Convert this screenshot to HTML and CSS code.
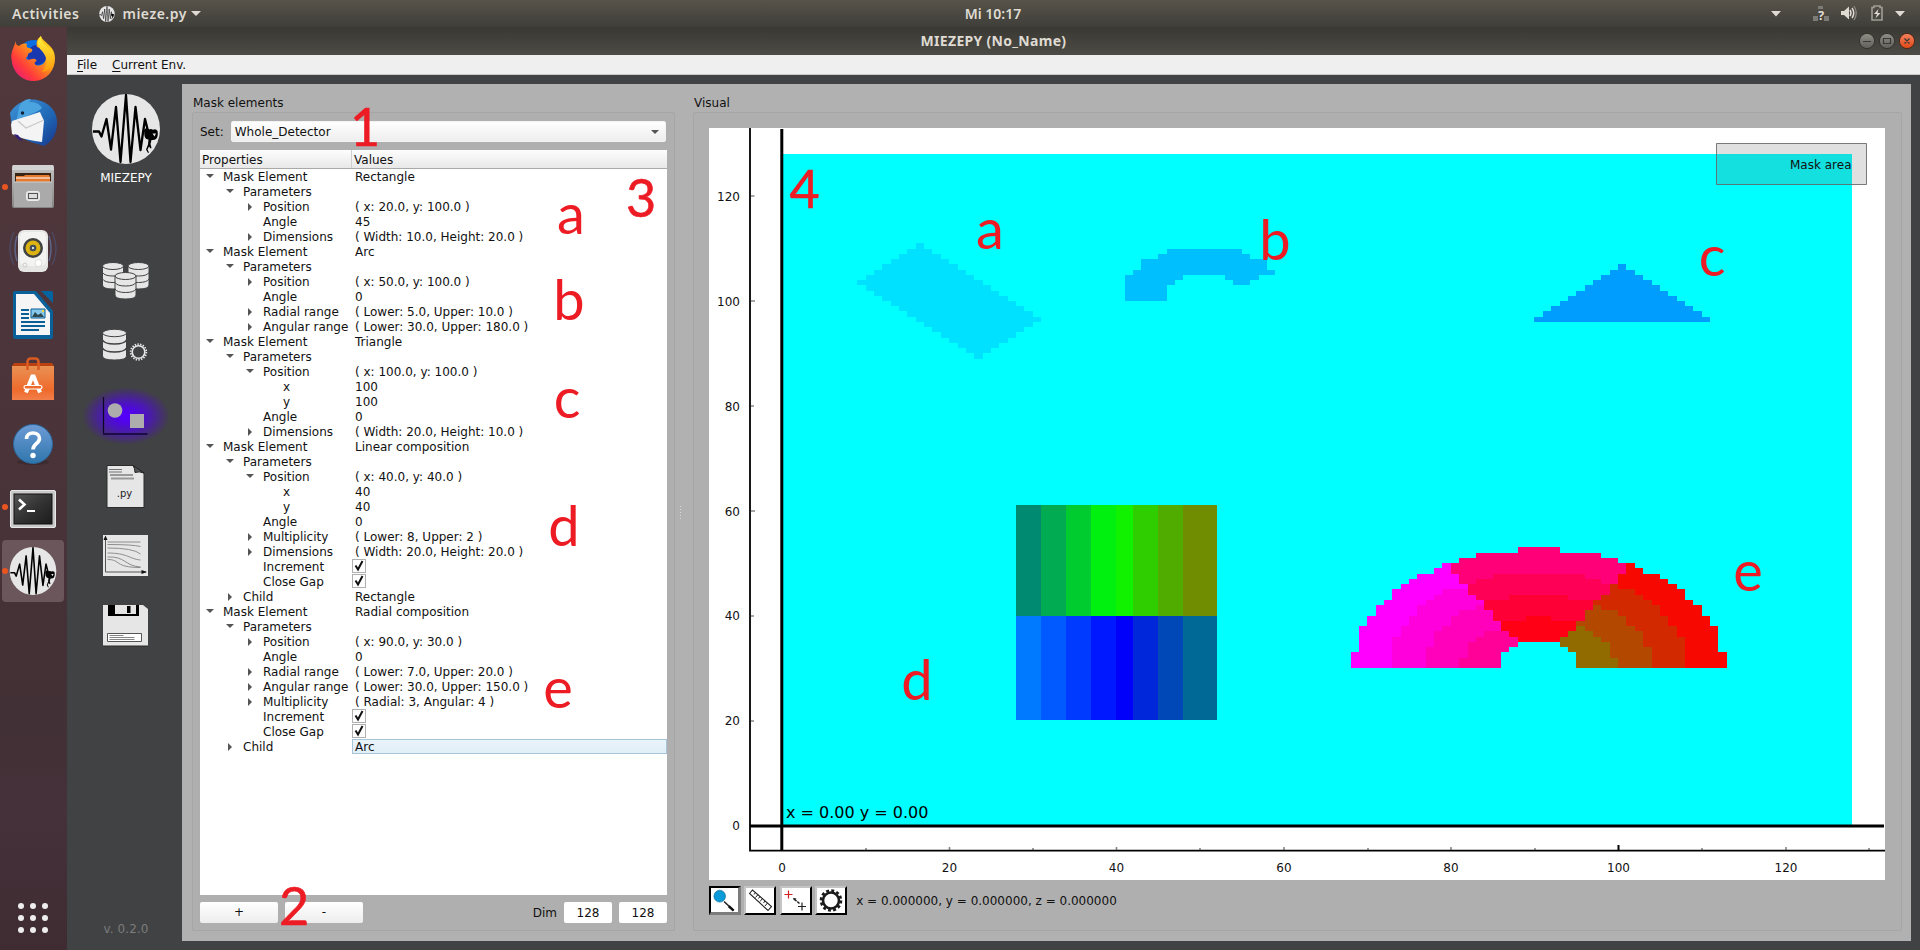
FILE: index.html
```html
<!DOCTYPE html>
<html lang="en">
<head>
<meta charset="utf-8">
<title>MIEZEPY (No_Name)</title>
<link rel="stylesheet" href="styles.css">
</head>
<body>
<svg class="defs" width="0" height="0" aria-hidden="true">
  <defs>
    <symbol id="logo" viewBox="0 0 68 70">
      <ellipse cx="34" cy="35" rx="34" ry="35" fill="#e6e6e6"/>
      <path d="M1 37.500h6l2.500 5L14.500 25l4.500 30.500L24 13l4.500 55L34 1l4.500 67L43.500 13 48.500 56l4.500-31 3 12" fill="none" stroke="#000" stroke-width="2.300" stroke-linejoin="round"/>
      <path d="M52 36q2-3 5-.5 2-1 4 .3 3-1.500 4.500 1.200 1 5-1 7.500-2 2-5 1.500l-1 4 1 4-1 .5-1.500-2-1.500 3 1.500 3-1 .5-2-3.500 2-5 .5-5q-3 0-4-3.500zM60.500 39.500l2 3 1.500-3z" fill="#000" fill-rule="evenodd"/>
    </symbol>
    <linearGradient id="knob" x1="0" y1="0" x2="0" y2="1"><stop offset="0" stop-color="#908f88"/><stop offset="1" stop-color="#5f5e58"/></linearGradient>
    <linearGradient id="knobRed" x1="0" y1="0" x2="0" y2="1"><stop offset="0" stop-color="#f4835f"/><stop offset="1" stop-color="#df4616"/></linearGradient>
    <linearGradient id="fox" x1="1" y1="0" x2="0" y2="1"><stop offset="0" stop-color="#ffe51e"/><stop offset=".4" stop-color="#ff9a17"/><stop offset=".7" stop-color="#ff3b3b"/><stop offset="1" stop-color="#e01090"/></linearGradient>
    <linearGradient id="foxYellow" x1="0" y1="0" x2="0" y2="1"><stop offset="0" stop-color="#fff23a"/><stop offset="1" stop-color="#ff9b0b"/></linearGradient>
    <linearGradient id="bird" x1="0" y1="0" x2="1" y2="1"><stop offset="0" stop-color="#3e94d8"/><stop offset=".6" stop-color="#1f66b5"/><stop offset="1" stop-color="#17358a"/></linearGradient>
    <linearGradient id="cab" x1="0" y1="0" x2="0" y2="1"><stop offset="0" stop-color="#c4c4c4"/><stop offset="1" stop-color="#858585"/></linearGradient>
    <linearGradient id="bag" x1="0" y1="0" x2="0" y2="1"><stop offset="0" stop-color="#e99154"/><stop offset=".7" stop-color="#ee6b2c"/><stop offset="1" stop-color="#f27f4a"/></linearGradient>
    <linearGradient id="help" x1="0" y1="0" x2="0" y2="1"><stop offset="0" stop-color="#6d9bd6"/><stop offset="1" stop-color="#2f76ac"/></linearGradient>
    <linearGradient id="term" x1="0" y1="0" x2="1" y2="1"><stop offset="0" stop-color="#555"/><stop offset=".5" stop-color="#333"/><stop offset="1" stop-color="#1c1c1c"/></linearGradient>
    <radialGradient id="glow"><stop offset="0" stop-color="#5500ff"/><stop offset=".2" stop-color="#5104ea"/><stop offset=".5" stop-color="#4a18b4"/><stop offset=".8" stop-color="#453070"/><stop offset="1" stop-color="#414243"/></radialGradient>
  </defs>
</svg>

<header class="topbar">
  <div class="topbar-left">
    <span>Activities</span>
    <span class="appmenu"><svg width="16" height="16"><use href="#logo"/></svg>mieze.py<i class="caret"></i></span>
  </div>
  <span class="clock">Mi 10:17</span>
  <svg class="tray" viewBox="1760 0 160 27">
    <path d="M1771 11h10l-5 5.500zM1895 11h10l-5 5.500z" fill="#dfdbd2"/>
    <path d="M1818 6h5v3h-5zM1813 16h5v5h-5zM1824 16h5v5h-5z" fill="#7d7b75"/>
    <text x="1821" y="20" text-anchor="middle" class="tray-q">?</text>
    <path d="M1841 11h3l5-4.500v13l-5-4.500h-3z" fill="#dfdbd2"/>
    <path d="M1850 10q2 3 0 6M1852 8q3.500 5 0 10" fill="none" stroke="#dfdbd2" stroke-width="1.500"/>
    <path d="M1854 6q4.500 7 0 14" fill="none" stroke="#8b8982" stroke-width="1.300"/>
    <path d="M1872 7.500h2V6h6v1.500h2V20h-10z" fill="none" stroke="#a09e97" stroke-width="1.600"/>
    <path d="M1878.500 9l-4.500 5h3l-1.500 4.500 5-5.500h-3z" fill="#dfdbd2"/>
  </svg>
</header>

<div class="desktop">
  <nav class="dock">
    <svg class="app" viewBox="0 27 67 64">
      <circle cx="34" cy="57" r="17" fill="#0a6fe0"/><circle cx="37" cy="55" r="10" fill="#1838b0"/>
      <path d="M16 41c0 3 0 4 3 5 2-2 5-3 8-2-1 2 0 4 2 4l3 1c1 3-1 3-4 5 0 3-2 3-2 5 4 2 5-1 9 0 2 1 2 2 0 3-2 4 5 5 9 1 5-6 0-14-7-16-1-5 0-8 4-11 2 7 14 9 14 22a21.600 22 0 0 1-43.300 2C10 53 14 47 16 41z" fill="url(#fox)"/>
      <path d="M41 36c-5 5-4 10 1 15 6 7 6 14 0 21 9-1 13-9 12-17-1-8-13-9-13-19z" fill="url(#foxYellow)"/>
    </svg>
    <svg class="app" viewBox="0 91 67 64">
      <path d="M10 113c5-9 16-15 27-13 15 3 21 14 20 26-1 10-7 17-13 20l-13-4-18-8z" fill="url(#bird)"/>
      <path d="M19 107c3-7 8-8 12-8l-2 3c6 0 10 1 13 6-7 6-12 5-18 10-4 3-8 6-9 11z" fill="#4ba4df"/>
      <path d="M12 121l28-9 4 9-2 21c-9-1-20-3-30-8l-1-9z" fill="#f4f4f4"/>
      <path d="M18 121l8 7 18-8" fill="none" stroke="#c9c9cd" stroke-width="1.300"/>
      <circle cx="22.500" cy="113" r="1.700" fill="#123"/><path d="M14 134q3 6 9 7l-5-6z" fill="#312079"/>
    </svg>
    <svg class="app" viewBox="0 155 67 64">
      <circle cx="5" cy="187" r="3" fill="#e95420"/>
      <rect x="12" y="165" width="42" height="43" rx="2" fill="url(#cab)"/><path d="M13 165h40l1 5H12z" fill="#d3d3d3"/>
      <rect x="15" y="173" width="36" height="9" fill="#3c2413"/><path d="M16 176h8l1-1h24l1 2v6H16z" fill="#e47a30"/><path d="M16 178h34" stroke="#fff" stroke-width="1.200"/>
      <path d="M14 182h38v25H14z" fill="#aaa"/><path d="M14 182h38" stroke="#cfcfcf"/>
      <rect x="26.500" y="191.500" width="13" height="9" rx="2" fill="#ddd" stroke="#eee"/><rect x="28.500" y="193.500" width="9" height="5" fill="#ddd" stroke="#555"/>
    </svg>
    <svg class="app" viewBox="0 219 67 64">
      <path d="M14 232q-8 17 0 33M52 232q8 17 0 33" fill="none" stroke="#4d4a66" stroke-width="1.300"/><path d="M17 236q-4 12 0 25M49 236q4 12 0 25" fill="none" stroke="#5d6488" stroke-width="1.500"/>
      <rect x="18" y="230" width="30" height="42" rx="6" fill="#e6e6e4"/><rect x="20" y="232" width="26" height="34" rx="5" fill="#f3f3f1"/>
      <circle cx="33" cy="248" r="10" fill="#3f4242"/><circle cx="33" cy="248" r="7.500" fill="#dcb313"/><circle cx="33" cy="248" r="3.300" fill="#3d4a58"/><circle cx="33" cy="248" r="1.200" fill="#ddd"/>
      <circle cx="38.500" cy="263" r="3.500" fill="#fff" stroke="#ccc" stroke-width=".6"/><circle cx="25" cy="265" r="2" fill="none" stroke="#ccc"/>
    </svg>
    <svg class="app" viewBox="0 283 67 64">
      <path d="M13 293q0-2 2-2h21l17 20v26q0 2-2 2H15q-2 0-2-2z" fill="#0a6199"/><path d="M16 294h18l16 19v22H16z" fill="#f5f5f5"/>
      <path d="M41 291h10q2 0 2 2v10z" fill="#04649f"/>
      <path d="M21 310h8M21 314h8M21 318h8M21 322h24M21 326h24M21 330h18" stroke="#0a5f96" stroke-width="1.900"/>
      <path d="M31 309h14v9H31z" fill="#87c9ec" stroke="#0a5f96"/><path d="M32 317l3-5 3 3 3-2 3 4z" fill="#2e4a50"/><circle cx="43" cy="311" r="1.200" fill="#f4d63a"/>
    </svg>
    <svg class="app" viewBox="0 347 67 64">
      <path d="M12 366l2-3h38l2 3z" fill="#b9410f"/><path d="M12 366h42v34H12z" fill="url(#bag)"/>
      <path d="M27.500 370v-8q0-3.500 3.500-3.500h4q3.500 0 3.500 3.500v8" fill="none" stroke="#da5a22" stroke-width="2.500"/>
      <path d="M26 392.500l6.300-16h1.400l6.300 16" fill="none" stroke="#fff" stroke-width="4"/><rect x="24" y="385.500" width="18" height="3.500" rx="1.700" fill="#ee6b2c" stroke="#fff" stroke-width="1.200"/>
    </svg>
    <svg class="app" viewBox="0 411 67 64">
      <ellipse cx="33" cy="462" rx="16" ry="3" fill="#33262a" opacity=".6"/><circle cx="33" cy="444" r="19.500" fill="url(#help)" stroke="#2a679b"/>
      <path d="M26.500 439c0-4 3-6 6.500-6s6.500 2 6.500 5.500c0 5-6.500 5.500-6.500 11" fill="none" stroke="#fff" stroke-width="3.600"/><circle cx="33" cy="455.500" r="2.700" fill="#fff"/>
    </svg>
    <svg class="app" viewBox="0 475 67 64">
      <circle cx="5" cy="507" r="3" fill="#e95420"/>
      <rect x="10.500" y="490.500" width="45" height="37" rx="1.500" fill="#c9c9c9" stroke="#e8e8e8"/><rect x="14" y="494" width="38" height="30" fill="url(#term)" stroke="#111"/>
      <path d="M19 499.500l5.500 5-5.500 5" fill="none" stroke="#fff" stroke-width="2.600"/><path d="M27 511h8" stroke="#fff" stroke-width="2"/>
    </svg>
    <svg class="app" viewBox="0 539 67 64">
      <rect x="2" y="540" width="62" height="62" rx="4" fill="#6a565b"/><circle cx="5" cy="571" r="3" fill="#e95420"/>
      <use href="#logo" x="9" y="547" width="48" height="48"/>
    </svg>
    <svg class="apps-grid" viewBox="0 890 67 60"><g fill="#eee"><circle cx="21" cy="906" r="3"/><circle cx="33" cy="906" r="3"/><circle cx="45" cy="906" r="3"/><circle cx="21" cy="918" r="3"/><circle cx="33" cy="918" r="3"/><circle cx="45" cy="918" r="3"/><circle cx="21" cy="930" r="3"/><circle cx="33" cy="930" r="3"/><circle cx="45" cy="930" r="3"/></g></svg>
  </nav>

  <section class="window">
    <div class="titlebar">
      <span>MIEZEPY (No_Name)</span>
      <svg class="winbtns" viewBox="1850 27 70 28">
        <circle cx="1867" cy="41" r="7.600" fill="url(#knob)" stroke="#34332e"/><circle cx="1887" cy="41" r="7.600" fill="url(#knob)" stroke="#34332e"/><circle cx="1907" cy="41" r="7.600" fill="url(#knobRed)" stroke="#4a2a1c"/>
        <path d="M1863 41.500h8M1883.500 38.500h7v5h-7zM1904.500 38.500l5 5M1909.500 38.500l-5 5" fill="none" stroke="#3a3935" stroke-width="1.200"/>
      </svg>
    </div>
    <div class="menubar"><span><u>F</u>ile</span><span><u>C</u>urrent Env.</span></div>

    <div class="content">
      <aside class="side">
        <svg class="side-logo" viewBox="0 0 68 70"><use href="#logo"/></svg>
        <div class="side-name">MIEZEPY</div>
        <svg class="side-icon first" viewBox="67 245 115 70">
          <g fill="#e6e6e6" stroke="#414243" stroke-width="1">
            <g id="db"><path d="M102.500 266v19q0 4 10.500 4t10.500-4v-19z"/><ellipse cx="113" cy="266" rx="10.500" ry="3.500"/><path d="M102.500 272.500q2 3.500 10.500 3.500t10.500-3.500M102.500 279q2 3.500 10.500 3.500t10.500-3.500" fill="none"/></g>
            <use href="#db" x="25.500"/><use href="#db" x="12.500" y="10"/>
          </g>
        </svg>
        <svg class="side-icon" viewBox="67 315 115 70">
          <g fill="#e6e6e6" stroke="#414243"><path d="M102.500 333v23q0 4 12 4t12-4v-23z"/><ellipse cx="114.500" cy="333" rx="12" ry="3.700"/><path d="M102.500 340q2 4 12 4t12-4M102.500 348q2 4 12 4t12-4" fill="none" stroke-width="1.500"/></g>
          <circle cx="138.500" cy="352" r="7.800" fill="none" stroke="#e6e6e6" stroke-width="1.800" stroke-dasharray="1.400 1.322"/><circle cx="138.500" cy="352" r="6.300" fill="none" stroke="#e6e6e6" stroke-width="1.600"/>
        </svg>
        <svg class="side-icon" viewBox="67 385 115 70">
          <ellipse cx="126" cy="416" rx="44" ry="29" fill="url(#glow)"/>
          <path d="M103.500 397v36.500" stroke="#0c0822" stroke-width="1.200"/><path d="M103 434h44.500" stroke="#1c0c48" stroke-width="1.800"/>
          <circle cx="115" cy="410.500" r="7.300" fill="#adadad"/><path d="M130 414h14v14h-14z" fill="#adadad"/>
        </svg>
        <svg class="side-icon" viewBox="67 455 115 70">
          <path d="M107 465.500h26l11 7.500v34.500h-37z" fill="#e6e6e6" stroke="#2c2c2c"/><path d="M133 465.500q2 3 2 7 4-1.500 9 .5z" fill="#555" stroke="#222"/>
          <path d="M109 469.500h13M109 472h13" stroke="#555" stroke-width=".8"/><path d="M110 475h23M111 478.500h23" stroke="#999" stroke-width="2.200"/>
          <text x="124.500" y="497" text-anchor="middle" class="py">.py</text>
        </svg>
        <svg class="side-icon" viewBox="67 525 115 70">
          <path d="M103 535h45v41h-45z" fill="#e6e6e6"/>
          <path d="M107.500 542h33M107.500 544.500q25 0 33 2M107.500 548q26 0 33 6M107.500 553c20 0 22 6 33 7M107.500 557c18-1 17 9 33 10M107.500 559.500c14 0 6 8 33 8" fill="none" stroke="#777" stroke-width=".8"/>
          <path d="M105.500 538v34H146" fill="none" stroke="#555"/><path d="M103.500 540l2-4.500 2 4.500zM141.500 570l5.500 2-5.500 2z" fill="#111"/>
        </svg>
        <svg class="side-icon" viewBox="67 595 115 70">
          <path d="M103 605h40l5 4v37h-45z" fill="#e6e6e6"/><path d="M103 646h45" stroke="#2a2a2a"/>
          <path d="M108 605h31v11h-31z" fill="#000"/><path d="M115 605h21v9h-21z" fill="#e6e6e6"/><path d="M127 606h3.500v7H127z" fill="#000"/>
          <path d="M107.500 633.500h34v8h-34z" fill="#fff" stroke="#555"/><path d="M109.500 635.500h14M109.500 637.500h25M109.500 639.500h25" stroke="#666" stroke-width=".8"/>
        </svg>
        <div class="version">v. 0.2.0</div>
      </aside>

      <main class="panel">
        <section class="group group-mask">
          <h2>Mask elements</h2>
          <div class="box">
            <div class="set"><label>Set:</label><div class="combo">Whole_Detector<i class="arrow down"></i></div></div>
            <div class="tree">
              <div class="thead"><span>Properties</span><span>Values</span></div>
              <div class="row l0"><span class="open">Mask Element</span><b>Rectangle</b></div>
              <div class="row l1"><span class="open">Parameters</span></div>
              <div class="row l2"><span class="shut">Position</span><b>( x: 20.0, y: 100.0 )</b></div>
              <div class="row l2"><span>Angle</span><b>45</b></div>
              <div class="row l2"><span class="shut">Dimensions</span><b>( Width: 10.0, Height: 20.0 )</b></div>
              <div class="row l0"><span class="open">Mask Element</span><b>Arc</b></div>
              <div class="row l1"><span class="open">Parameters</span></div>
              <div class="row l2"><span class="shut">Position</span><b>( x: 50.0, y: 100.0 )</b></div>
              <div class="row l2"><span>Angle</span><b>0</b></div>
              <div class="row l2"><span class="shut">Radial range</span><b>( Lower: 5.0, Upper: 10.0 )</b></div>
              <div class="row l2"><span class="shut">Angular range</span><b>( Lower: 30.0, Upper: 180.0 )</b></div>
              <div class="row l0"><span class="open">Mask Element</span><b>Triangle</b></div>
              <div class="row l1"><span class="open">Parameters</span></div>
              <div class="row l2"><span class="open">Position</span><b>( x: 100.0, y: 100.0 )</b></div>
              <div class="row l3"><span>x</span><b>100</b></div>
              <div class="row l3"><span>y</span><b>100</b></div>
              <div class="row l2"><span>Angle</span><b>0</b></div>
              <div class="row l2"><span class="shut">Dimensions</span><b>( Width: 20.0, Height: 10.0 )</b></div>
              <div class="row l0"><span class="open">Mask Element</span><b>Linear composition</b></div>
              <div class="row l1"><span class="open">Parameters</span></div>
              <div class="row l2"><span class="open">Position</span><b>( x: 40.0, y: 40.0 )</b></div>
              <div class="row l3"><span>x</span><b>40</b></div>
              <div class="row l3"><span>y</span><b>40</b></div>
              <div class="row l2"><span>Angle</span><b>0</b></div>
              <div class="row l2"><span class="shut">Multiplicity</span><b>( Lower: 8, Upper: 2 )</b></div>
              <div class="row l2"><span class="shut">Dimensions</span><b>( Width: 20.0, Height: 20.0 )</b></div>
              <div class="row l2"><span>Increment</span><svg class="check" viewBox="0 0 12 12"><path d="M2.500 5.500l2.500 4 4.500-8.500" /></svg></div>
              <div class="row l2"><span>Close Gap</span><svg class="check" viewBox="0 0 12 12"><path d="M2.500 5.500l2.500 4 4.500-8.500" /></svg></div>
              <div class="row l1"><span class="shut">Child</span><b>Rectangle</b></div>
              <div class="row l0"><span class="open">Mask Element</span><b>Radial composition</b></div>
              <div class="row l1"><span class="open">Parameters</span></div>
              <div class="row l2"><span class="shut">Position</span><b>( x: 90.0, y: 30.0 )</b></div>
              <div class="row l2"><span>Angle</span><b>0</b></div>
              <div class="row l2"><span class="shut">Radial range</span><b>( Lower: 7.0, Upper: 20.0 )</b></div>
              <div class="row l2"><span class="shut">Angular range</span><b>( Lower: 30.0, Upper: 150.0 )</b></div>
              <div class="row l2"><span class="shut">Multiplicity</span><b>( Radial: 3, Angular: 4 )</b></div>
              <div class="row l2"><span>Increment</span><svg class="check" viewBox="0 0 12 12"><path d="M2.500 5.500l2.500 4 4.500-8.500" /></svg></div>
              <div class="row l2"><span>Close Gap</span><svg class="check" viewBox="0 0 12 12"><path d="M2.500 5.500l2.500 4 4.500-8.500" /></svg></div>
              <div class="row l1"><span class="shut">Child</span><b class="selected">Arc</b></div>
            </div>
            <div class="actions">
              <div class="btn">+</div><div class="btn">-</div>
              <span class="dim">Dim</span><div class="num">128</div><div class="num">128</div>
            </div>
          </div>
        </section>

        <div class="splitter"></div>

        <section class="group group-visual">
          <h2>Visual</h2>
          <div class="box">
            <svg class="plot" viewBox="709 128 1176 752">
              <path d="M709 128h1176v752H709z" fill="#fff"/>
              <g transform="translate(781.900 825.300) scale(8.362 -5.243)" shape-rendering="crispEdges">
                <path d="M0 0h128v128H0z" fill="#0ff"/>
                <path fill="#00e0ff" d="M16 111H17V110H18V109H19V108H20V107H21V106H22V105H23V104H24V103H25V102H26V101H27V100H28V99H29V98H30V97H31V96H30V95H29V94H28V93H27V92H26V91H25V90H24V89H23V90H22V91H21V92H20V93H19V94H18V95H17V96H16V97H15V98H14V99H13V100H12V101H11V102H10V103H9V104H10V105H11V106H12V107H13V108H14V109H15V110H16z"/>
                <path fill="#00bfff" d="M46 110h9v-1h1v-1h2v-2h1v-1h-2v-1h-1v-1h-2v1h-1v1h-5v-1h-1v-1h-1v-3h-5v5h1v1h1v2h2v1h1z"/>
                <path fill="#009dff" d="M100 107h1v-1h1v-1h1v-1h1v-1h1v-1h1v-1h1v-1h1v-1h1v-1h1v-1h1v-1H90v1h1v1h1v1h1v1h1v1h1v1h1v1h1v1h1v1h1v1h1z"/>
                <path fill="#008a72" d="M28 40h3v21h-3z"/><path fill="#00ab51" d="M31 40h3v21h-3z"/><path fill="#00cc30" d="M34 40h3v21h-3z"/><path fill="#00f00f" d="M37 40h3v21h-3z"/><path fill="#11f200" d="M40 40h2v21h-2z"/><path fill="#2fce00" d="M42 40h3v21h-3z"/><path fill="#50ad00" d="M45 40h3v21h-3z"/><path fill="#708c00" d="M48 40h4v21h-4z"/>
                <path fill="#007bff" d="M28 20h3v20h-3z"/><path fill="#005aff" d="M31 20h3v20h-3z"/><path fill="#0039ff" d="M34 20h3v20h-3z"/><path fill="#0018ff" d="M37 20h3v20h-3z"/><path fill="#0000fb" d="M40 20h2v20h-2z"/><path fill="#0027d9" d="M42 20h3v20h-3z"/><path fill="#0048b7" d="M45 20h3v20h-3z"/><path fill="#006995" d="M48 20h4v20h-4z"/>
                <path fill="#f0f" d="M79 50h1v-2h1v-2h1v-2h1v-1h1v-2h1v-2h1v-2h1v-1h1v-2h-1v-1h-1v-3H68V33h1V38h1V40h1V42h1V43h1V45h1V46h1V47h1V48h2V49h1z"/>
                <path fill="#ff00dd" d="M79 45H82V44h1v-1h1v-2h1v-2h1v-2h1v-1h1v-2h-1v-1h-1v-3H73V36h1V38h1V40h1V42h1V43h1V44h1z"/>
                <path fill="#ff00bb" d="M83 42h1v-1h1v-2h1v-2h1v-1h1v-2h-1v-1h-1v-3H77V34h1V37h1V38h1V40h1V41h2z"/>
                <path fill="#ff0099" d="M84 37H87v-1h1v-2h-1v-1h-1v-3H81V32h1V35h1V36h1z"/>
                <path fill="#ff0079" d="M88 53h5v-1h5v-1h2v-1h1v-2h-1v-2h-1v-2h-1v-1h-1v-2h-1v-2h-1v-2h-1v-1h-1v-1H88v1h-1v1h-1v2h-1v2h-1v2h-1v1h-1v2h-1v2h-1v2h1v1h2v1h5z"/>
                <path fill="#ff0057" d="M85 48H96V47H98V46H99V44H98V43H83V44H82V46H83V47H85z"/>
                <path fill="#ff0036" d="M87 44H94V43H97V41H96V39H85V41H84V43H87z"/>
                <path fill="#ff0015" d="M89 40H92V39H95V37H94V36H93V35H88V36H87V37H86V39H89z"/>
                <path fill="#f70800" d="M101 50h1v-1h1v-1h2v-1h1v-1h1v-1h1V43h1V42h1V40h1V38h1V33h1V30H95V33h-1v1h-1V36h1v1h1V39h1V41h1V43h1V44h1V46h1V48h1z"/>
                <path fill="#d32900" d="M99 46h1V45H102V44h1V43h1V42h1V40h1V38h1V36h1V30H95V33h-1v1h-1V36h1v1h1V39h1V41h1V43h1V44h1z"/>
                <path fill="#b34900" d="M97 42h1V41H100V40h1V38h1V37h1V34h1V30H95V33h-1v1h-1V36h1v1h1V39h1V41h1z"/>
                <path fill="#916b00" d="M95 38h1V37h1V36h1V35h1V32h1V30H95V33h-1v1h-1V36h1v1h1z"/>
              </g>
              <path d="M866 850v-2M1033 850v-2M1200 850v-2M1368 850v-2M1535 850v-2M1702 850v-2M1869 850v-2M949.500 850v-3M1116.500 850v-3M1284 850v-3M1451 850v-3M1786 850v-3M751 196h3.500M751 301h4M751 406h3M751 511h4M751 616h3M751 721h3" stroke="#888" stroke-width="1.600"/>
              <path d="M1618.500 850v-5" stroke="#000" stroke-width="2"/>
              <path d="M750 128v723.500M749.500 850.700H1885" stroke="#000" stroke-width="1.800"/>
              <path d="M781.800 129v721M750 826h1134" stroke="#000" stroke-width="3"/>
              <g class="ticks" text-anchor="end"><text x="740" y="201">120</text><text x="740" y="306">100</text><text x="740" y="411">80</text><text x="740" y="516">60</text><text x="740" y="620">40</text><text x="740" y="725">20</text><text x="740" y="830">0</text></g>
              <g class="ticks" text-anchor="middle"><text x="782" y="872">0</text><text x="949.500" y="872">20</text><text x="1116.500" y="872">40</text><text x="1284" y="872">60</text><text x="1451" y="872">80</text><text x="1618.500" y="872">100</text><text x="1786" y="872">120</text></g>
              <text x="786" y="818" class="coords">x = 0.00 y = 0.00</text>
              <path d="M1716.500 143.500h150v41h-150z" fill="#646464" fill-opacity=".2" stroke="#646464" stroke-opacity=".85"/>
              <text x="1851.500" y="169" text-anchor="end" class="legend">Mask area</text>
            </svg>
            <div class="tools">
              <svg class="tool pressed" viewBox="0 0 27 25"><path d="M13 14l10 9.500" stroke="#222" stroke-width="1.600"/><ellipse cx="8.500" cy="8.500" rx="6" ry="6.200" fill="#0a9bd8" stroke="#06597e" stroke-width=".6"/><path d="M18 19l5 4.500" stroke="#111" stroke-width="2.500"/></svg>
              <svg class="tool" viewBox="0 0 27 25"><path d="M3 5.500L6 2l19 16.500-3.500 4z" fill="#fff" stroke="#222" stroke-width="1.100"/><path d="M9 4.500L7.500 6.500M11.500 6.500l-2.500 3M13.500 8.500L12 10.500M16 10.500l-2.500 3M18.500 13l-1.500 2M21 15l-2.500 3" stroke="#222"/></svg>
              <svg class="tool" viewBox="0 0 27 25"><path d="M2 6.500h8M6 2.500v8" stroke="#d02020" stroke-width="1.200"/><path d="M15.500 18.500h8M19.500 14.500v8" stroke="#222" stroke-width="1.200"/><path d="M11 10.500l6 5" stroke="#222" stroke-width="1.500" stroke-dasharray="4 1"/><path d="M10.500 10l3.500.5-2 2z" fill="#222"/></svg>
              <svg class="tool" viewBox="0 0 27 25"><circle cx="13.500" cy="12.500" r="10" fill="none" stroke="#1a1a1a" stroke-width="2.600" stroke-dasharray="2.900 2.336"/><circle cx="13.500" cy="12.500" r="8" fill="none" stroke="#1a1a1a" stroke-width="2.600"/></svg>
              <span>x = 0.000000, y = 0.000000, z = 0.000000</span>
            </div>
          </div>
        </section>
      </main>
    </div>
  </section>
</div>

<svg class="notes" viewBox="0 0 1920 950" text-anchor="middle">
  <g class="digits"><text x="365" y="146">1</text><text x="294" y="925">2</text><text x="641" y="217">3</text><text x="804.500" y="207.500">4</text></g>
  <text x="571" y="234">a</text><text x="569" y="320">b</text><text x="567" y="418">c</text><text x="564" y="546">d</text><text x="558" y="708">e</text>
  <text x="990" y="249">a</text><text x="1275" y="259.500">b</text><text x="1712" y="276">c</text><text x="917" y="700">d</text><text x="1748" y="591">e</text>
</svg>
</body>
</html>
```

FILE: styles.css
```css
* { box-sizing: border-box; }
body { margin: 0; width: 1920px; height: 950px; overflow: hidden; display: flex; flex-direction: column; font: 12px/15px "DejaVu Sans", sans-serif; color: #111; background: #414243; }
svg { display: block; flex: none; }
.defs { position: absolute; }

.topbar { height: 27px; flex: none; display: grid; grid-template-columns: 1fr auto 1fr; align-items: center; background: linear-gradient(#57534a, #3f3e39); color: #dfdbd2; font: 600 14px/26px "Noto Sans", sans-serif; }
.topbar-left { display: flex; gap: 20px; padding-left: 12px; letter-spacing: .5px; }
.appmenu { display: flex; align-items: center; gap: 7px; }
.caret { border: 5px solid transparent; border-top-color: #dfdbd2; border-bottom: 0; margin-left: -3px; }
.clock { padding-left: 66px; }
.tray { width: 160px; height: 27px; justify-self: end; }
.tray-q { font: bold 13px "Noto Sans", sans-serif; fill: #dfdbd2; }

.desktop { flex: 1; display: flex; min-height: 0; }
.dock { width: 67px; flex: none; display: flex; flex-direction: column; background: linear-gradient(#51383c, #4a343a 45%, #413035 75%, #45313a 85%, #3f2c32); }
.app { width: 67px; height: 64px; }
.apps-grid { width: 67px; height: 60px; margin-top: auto; }

.window { flex: 1; display: flex; flex-direction: column; }
.titlebar { height: 28px; flex: none; display: grid; grid-template-columns: 1fr auto 1fr; align-items: center; background: linear-gradient(#393833, #4d4b45); color: #dfdbd2; font: 700 14px/28px "Noto Sans", sans-serif; letter-spacing: .3px; }
.titlebar span { grid-column: 2; }
.winbtns { width: 70px; height: 28px; justify-self: end; }
.menubar { height: 20px; flex: none; display: flex; gap: 15px; padding: 3px 10px 0; background: #efefef; border-bottom: 1px solid #c8c8c8; }
.menubar u { text-underline-offset: 2px; }

.content { flex: 1; display: flex; min-height: 0; background: #414243; }
.side { width: 115px; flex: none; display: flex; flex-direction: column; align-items: center; padding-top: 19px; padding-left: 3px; color: #fff; }
.side-logo { width: 68px; height: 70px; }
.side-name { margin-top: 7px; }
.side-icon { width: 115px; height: 70px; margin-left: -3px; }
.first { margin-top: 59px; }
.py { font: 10px "DejaVu Sans", sans-serif; fill: #222; }
.version { margin-top: auto; margin-bottom: 13px; color: #7c7c7c; letter-spacing: .1px; }

.panel { width: 1729px; margin: 9px 9px 9px 0; display: flex; background: #b1b1b1; padding: 10px 9px 10px 10px; }
.group { display: flex; flex-direction: column; flex: none; }
.group-mask { width: 483px; }
.group-visual { flex: 1; }
h2 { margin: 0; font-size: 12px; font-weight: normal; line-height: 18px; padding-left: 1px; }
.box { flex: 1; border: 1px solid #a6a6a6; border-radius: 2px; background: #afafaf; }
.group-mask .box { padding: 8px 7px 7px; }
.splitter { width: 18px; align-self: center; height: 16px; background: radial-gradient(circle, #dadada 35%, transparent 40%) 4px 0 / 3px 3px repeat-y; }

.set { display: flex; align-items: center; gap: 7px; }
.set label { padding-top: 1px; }
.combo { flex: 1; height: 21px; margin-right: 1px; padding: 1px 6px 0 3px; display: flex; justify-content: space-between; align-items: center; border-radius: 2px; background: linear-gradient(#fefefe, #eee); border: 1px solid #f3f3f3; }
.arrow { border: 4px solid transparent; border-top-color: #555; border-bottom: 0; }

.tree { height: 745px; margin-top: 8px; background: #fff; }
.thead { display: grid; grid-template-columns: 151px 1fr; height: 19px; margin-bottom: 1px; background: linear-gradient(#fdfdfd, #e8e8e8); border-bottom: 1px solid #a9a9a9; line-height: 20px; }
.thead span { padding-left: 2px; height: 18px; }
.thead span + span { border-left: 1px solid #cfcfcf; }
.row { height: 15px; display: grid; grid-template-columns: 152px 1fr; }
.row span { white-space: nowrap; }
.l0 span { padding-left: 23px; }
.l1 span { padding-left: 43px; }
.l2 span { padding-left: 63px; }
.l3 span { padding-left: 83px; }
.row b { font-weight: normal; padding-left: 3px; white-space: nowrap; }
.row .selected { height: 15px; margin-top: -1px; background: linear-gradient(#eaf4fb, #e0eef7); border: 1px solid #a8c4d8; line-height: 15px; padding-left: 2px; }
.open::before { content: ""; display: inline-block; border: 4px solid transparent; border-top-color: #555; border-bottom: 0; margin: 0 9px 3px -17px; }
.shut::before { content: ""; display: inline-block; border: 4px solid transparent; border-left-color: #555; border-right: 0; margin: 0 11px 0 -15px; }
.check { width: 14px; height: 14px; margin-top: -1px; background: #fff; border: 1px solid #b0b0b0; }
.check path { fill: none; stroke: #111; stroke-width: 2; }

.actions { display: flex; align-items: center; margin-top: 7px; }
.btn { width: 78px; height: 21px; margin-right: 7px; text-align: center; line-height: 21px; border-radius: 2px; background: linear-gradient(#fff, #ededed); }
.dim { margin-left: auto; margin-right: 7px; padding-top: 1px; }
.num { width: 48px; height: 21px; line-height: 22px; text-align: center; background: #fff; border-radius: 2px; }
.num + .num { margin-left: 7px; }

.group-visual .box { padding: 15px 15px 0; }
.plot { width: 1176px; height: 752px; }
.ticks text, .legend { font: 12px "DejaVu Sans", sans-serif; fill: #111; }
.coords { font: 16px "DejaVu Sans", sans-serif; fill: #000; }
.tools { display: flex; align-items: center; gap: 3.300px; margin-top: 6px; }
.tool { width: 32px; height: 29px; background: #fff; border: 2px solid; border-color: #c4c4c4 #000 #000 #c4c4c4; }
.pressed { border-color: #000 #7c7c7c #7c7c7c #000; border-width: 2px 3px 3px 2px; }
.tools span { margin-left: 6px; padding-top: 1px; }

.notes { position: absolute; left: 0; top: 0; width: 1920px; height: 950px; pointer-events: none; }
.notes text { font: 56px Lato, sans-serif; fill: #ed1c24; }
.notes .digits text { font-size: 52px; stroke: #ed1c24; stroke-width: .6px; }
```
